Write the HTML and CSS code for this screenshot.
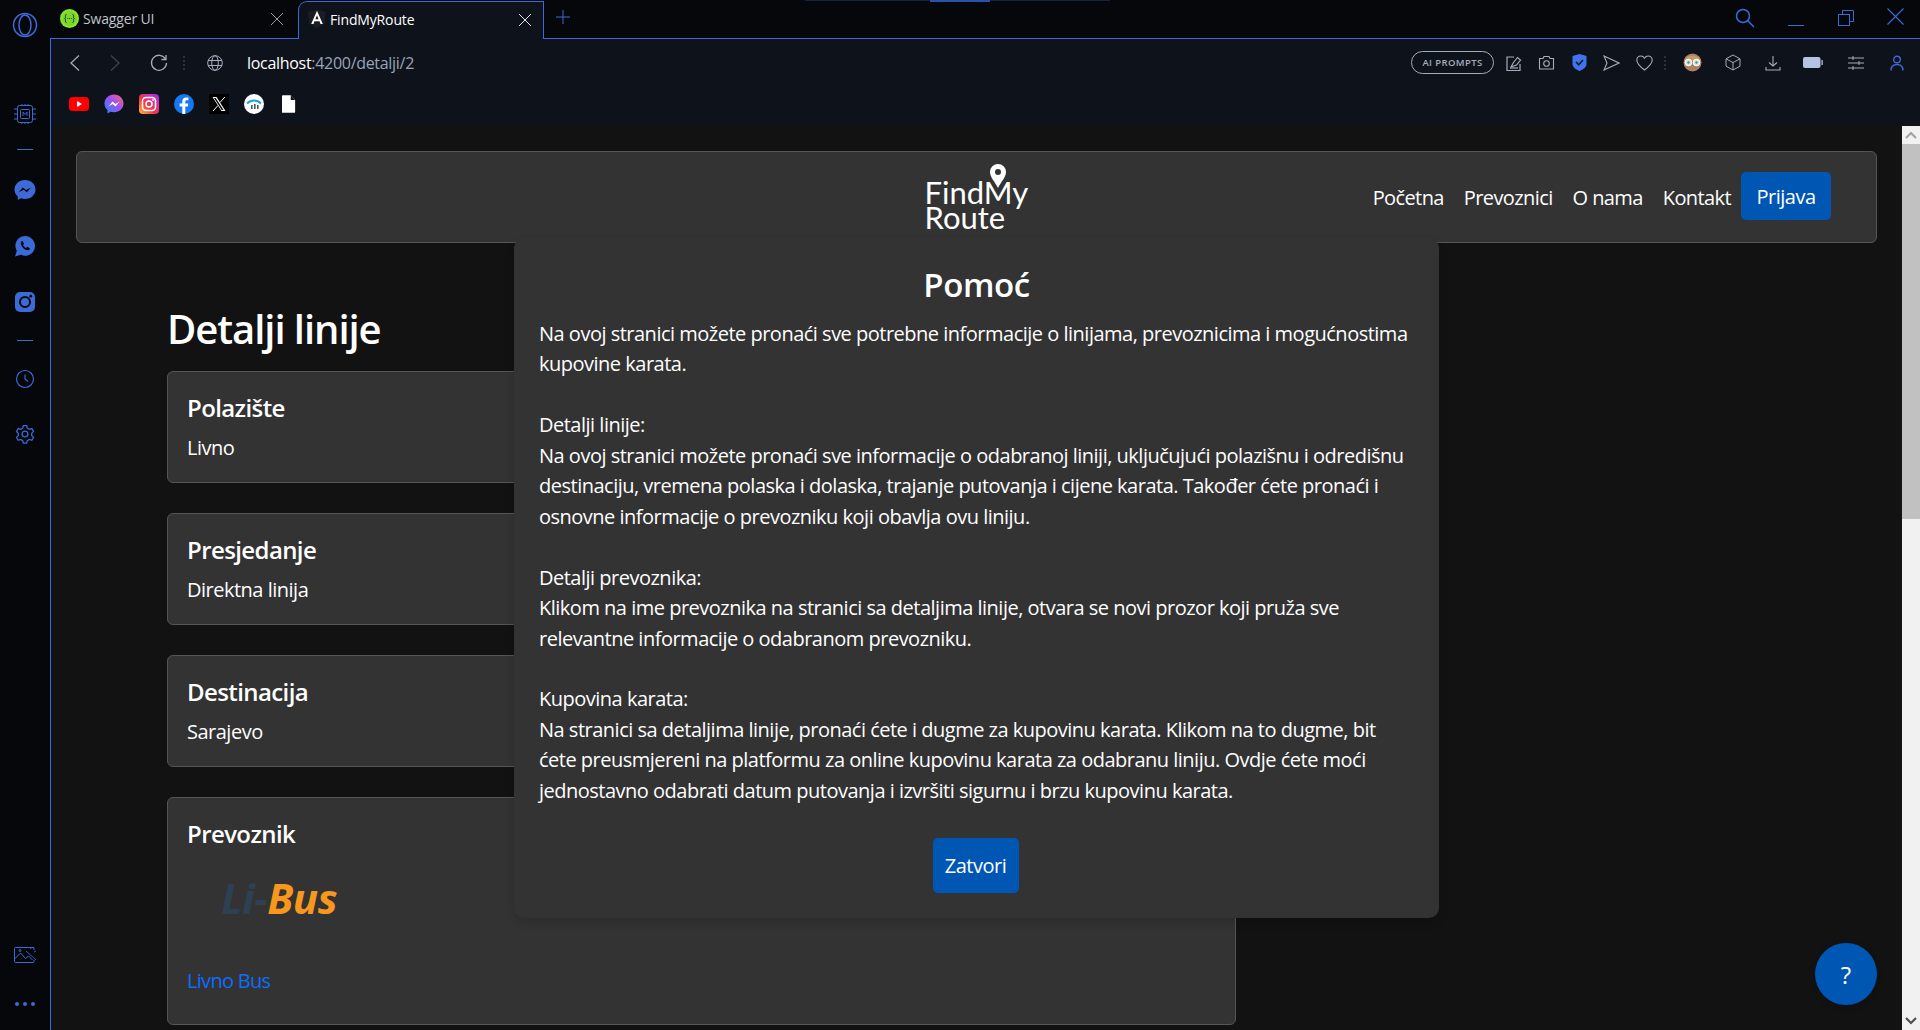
FILE: index.html
```html
<!DOCTYPE html>
<html lang="bs">
<head>
  <meta charset="UTF-8" />
  <title>FindMyRoute</title>
  <link rel="stylesheet" href="styles.css">
</head>
<body>
  <!-- traka s tabovima -->
  <div class="tabstrip">
    <div class="opera-slot">
      <svg width="26" height="26" viewBox="0 0 26 26" fill="none" stroke="#3c6ad6" stroke-width="1.5"><circle cx="13" cy="13" r="11.5"/><ellipse cx="13" cy="13" rx="6" ry="10"/></svg>
    </div>
    <div class="tab">
      <svg class="fav" width="19" height="19" viewBox="0 0 19 19"><circle cx="9.5" cy="9.5" r="9.5" fill="#85ea2d"/><circle cx="9.5" cy="9.5" r="7.5" fill="#7bd626"/><path d="M6.5 5.5c-1.5 0-1 2-1 3s-1 1-1 1 1 0 1 1-.5 3 1 3M12.500 5.500c1.500 0 1 2 1 3s1 1 1 1-1 0-1 1 .5 3-1 3" fill="none" stroke="#173647" stroke-width="1"/><path d="M7.500 9.500h.8M9.200 9.500h.8M10.900 9.500h.8" stroke="#173647" stroke-width="1"/></svg>
      <span class="tab-title">Swagger UI</span>
      <svg class="tab-x" width="14" height="14" viewBox="0 0 14 14" stroke="#9aa0aa" stroke-width="1"><path d="M1 1l12 12M13 1L1 13"/></svg>
    </div>
    <div class="tab tab-active">
      <svg class="fav" width="18" height="19" viewBox="0 0 16 17"><path d="M8 0l8 2.800-1.300 10.400L8 17l-6.700-3.800L0 2.800z" fill="#1a1d24"/><path d="M8 1.500L2.800 13.500h2l1-2.600h4.400l1 2.600h2zM6.600 9.200L8 5.700l1.400 3.500z" fill="#fff"/></svg>
      <span class="tab-title">FindMyRoute</span>
      <svg class="tab-x" width="14" height="14" viewBox="0 0 14 14" stroke="#e4e7ec" stroke-width="1"><path d="M1 1l12 12M13 1L1 13"/></svg>
    </div>
    <svg class="tab-plus" width="16" height="16" viewBox="0 0 16 16" stroke="#3c6ad6" stroke-width="1"><path d="M8 1v14M1 8h14"/></svg>
    <div class="win-glow"></div>
    <div class="win-btns">
      <svg width="20" height="20" viewBox="0 0 20 20" fill="none" stroke="#3c6ad6" stroke-width="1.500"><circle cx="8" cy="8" r="6.500"/><path d="M12.700 12.700L19 19"/></svg>
      <svg width="16" height="20" viewBox="0 0 16 20" fill="none" stroke="#3c6ad6"><path d="M0 17.500h16"/></svg>
      <svg class="win-restore" width="16" height="16" viewBox="0 0 16 16" fill="none" stroke="#3c6ad6"><rect x="0.500" y="4.500" width="11" height="11"/><path d="M4.500 4.500v-4h11v11h-4"/></svg>
      <svg width="17" height="17" viewBox="0 0 17 17" fill="none" stroke="#3c6ad6" stroke-width="1.100"><path d="M0.500 0.500l16 16M16.500 0.500l-16 16"/></svg>
    </div>
  </div>

  <div class="shell">
    <!-- lijevi meni preglednika -->
    <aside class="sidebar">
      <svg class="side-ico side-chip" width="24" height="24" viewBox="0 0 24 24" fill="none" stroke="#3c6ad6"><rect x="4.500" y="3.500" width="15" height="17" rx="2"/><rect x="7.500" y="7.500" width="9" height="9" rx="1"/><path d="M9 2v1.500M12 2v1.500M15 2v1.500M9 20.500V22M12 20.500V22M15 20.500V22M1 7h3.500M1 12h3.500M1 17h3.500M19.500 7H23M19.500 12H23M19.500 17H23"/><path d="M10 14v-4l2 2.500 2-2.500v4" stroke-width="0.900"/></svg>
      <div class="side-sep"></div>
      <svg class="side-ico" width="24" height="24" viewBox="0 0 24 24"><path d="M12 2C6 2 1.500 6.200 1.500 11.600c0 2.900 1.200 5.300 3.300 7v3.400l3.100-1.700c1.300.4 2.700.6 4.100.6 6 0 10.500-4.200 10.500-9.500S18 2 12 2z" fill="#3c6ad6"/><path d="M5.800 14.300l4-4.700 3.300 2.500 4.900-2.500-4.100 4.700-3.200-2.500z" fill="#06070b"/></svg>
      <svg class="side-ico" width="24" height="24" viewBox="0 0 24 24"><path d="M12.200 2C6.800 2 2.400 6.300 2.400 11.700c0 1.800.5 3.500 1.400 5L2 22.500l6-1.700c1.300.7 2.800 1 4.200 1 5.400 0 9.800-4.300 9.800-9.700S17.600 2 12.200 2z" fill="#3c6ad6"/><path d="M8.800 7.200c-.9.600-1.200 1.800-.8 3.300.7 2.400 3 4.800 5.600 5.500 1.500.4 2.800 0 3.200-1.100.2-.5.100-.8-.3-1l-2-.9c-.3-.1-.6 0-.8.200l-.7.800c-1.300-.5-2.400-1.600-3-2.900l.7-.7c.2-.2.300-.5.100-.8l-.9-2c-.2-.4-.7-.6-1.100-.4z" fill="#06070b"/></svg>
      <svg class="side-ico side-insta" width="24" height="24" viewBox="0 0 24 24"><rect x="2" y="2" width="20" height="20" rx="5" fill="#3c6ad6"/><circle cx="12" cy="12" r="5" fill="none" stroke="#06070b" stroke-width="2"/><circle cx="17.800" cy="6.200" r="1.400" fill="#06070b"/></svg>
      <div class="side-sep"></div>
      <svg class="side-ico side-clock" width="20" height="20" viewBox="0 0 20 20" fill="none" stroke="#3c6ad6" stroke-width="1.200"><circle cx="10" cy="10" r="8.500"/><path d="M10 5.500V10l3 2.500"/></svg>
      <svg class="side-ico" width="20" height="20" viewBox="0 0 24 24" fill="none" stroke="#3c6ad6" stroke-width="1.500"><circle cx="12" cy="12" r="3.500"/><path d="M10 2h4l.7 3 2.500 1.400 3-.9 2 3.500-2.200 2.100v2.800l2.200 2.100-2 3.500-3-.9-2.500 1.400-.7 3h-4l-.7-3-2.500-1.400-3 .9-2-3.500 2.200-2.100V11L1.800 9l2-3.500 3 .9L9.300 5z"/></svg>
      <div class="side-spacer"></div>
      <svg class="side-gal" width="24" height="20" viewBox="0 0 24 20" fill="none" stroke="#3c6ad6"><path d="M21 6V3.500H2.500a1 1 0 0 0-1 1v13a1 1 0 0 0 1 1H20a1 1 0 0 0 1-1V16"/><path d="M1.500 15l6-6 5 5.500 3-2.500 4 4"/><circle cx="7" cy="6.500" r="1"/><path d="M13 7l10 9M17 3l1 2M21 8l2-1" stroke-width="0.900"/></svg>
      <div class="side-dots"><i></i><i></i><i></i></div>
    </aside>

    <div class="window">
      <!-- adresna traka -->
      <div class="toolbar">
        <div class="nav-left">
          <svg width="12" height="18" viewBox="0 0 12 18" fill="none" stroke="#a5adbb" stroke-width="1.300"><path d="M10 1.500L2 9l8 7.500"/></svg>
          <svg class="dim" width="12" height="18" viewBox="0 0 12 18" fill="none" stroke="#3d4350" stroke-width="1.300"><path d="M2 1.500L10 9l-8 7.500"/></svg>
          <svg class="reload" width="18" height="18" viewBox="0 0 18 18" fill="none" stroke="#a5adbb" stroke-width="1.300"><path d="M15.500 5A7.500 7.500 0 1 0 16.500 9"/><path d="M16 1v4.500h-4.500"/></svg>
          <div class="tool-dots"></div>
          <svg class="globe" width="16" height="16" viewBox="0 0 16 16" fill="none" stroke="#a5adbb"><circle cx="8" cy="8" r="7.300"/><ellipse cx="8" cy="8" rx="3.300" ry="7.300"/><path d="M1 5.500h14M1 10.500h14"/></svg>
          <div class="url"><span class="url-host">localhost</span>:4200/detalji/2</div>
        </div>
        <div class="nav-right">
          <span class="ai-pill">AI PROMPTS</span>
          <svg width="18" height="18" viewBox="0 0 18 18" fill="none" stroke="#a5adbb" stroke-width="1.200"><path d="M9 3H2v13.500h13V10"/><path d="M6 13l2.500-4.500 4-5 3 2.500-4 5z"/><path d="M5 14h8"/></svg>
          <svg width="17" height="15" viewBox="0 0 17 15" fill="none" stroke="#a5adbb" stroke-width="1.100"><path d="M1.500 3.500h3.500l1-2h5l1 2h3.500v10.500h-14z"/><circle cx="8.500" cy="8.500" r="2.800"/></svg>
          <svg width="15" height="17" viewBox="0 0 15 17"><path d="M7.500 0L14.500 2v8c0 3-3.500 5.700-7 7-3.500-1.300-7-4-7-7V2z" fill="#3f74ee"/><path d="M4 8l2.700 2.700L11 6" fill="none" stroke="#0e121a" stroke-width="1.600"/></svg>
          <svg width="17" height="16" viewBox="0 0 17 16" fill="none" stroke="#a5adbb" stroke-width="1.100"><path d="M1 1l15 7-15 7 3-7z"/></svg>
          <svg width="17" height="16" viewBox="0 0 17 16" fill="none" stroke="#a5adbb" stroke-width="1.100"><path d="M8.500 15C4 11.500.8 8.700.8 5.200.8 2.800 2.600 1 4.800 1 6.300 1 7.700 1.800 8.500 3.200 9.300 1.800 10.700 1 12.200 1c2.200 0 4 1.800 4 4.200 0 3.500-3.200 6.300-7.700 9.800z"/></svg>
          <div class="tool-dots tool-dots-r"></div>
          <svg width="19" height="19" viewBox="0 0 19 19"><circle cx="9.500" cy="9.500" r="9" fill="#b0825c"/><path d="M1 8c2-7 15-7 17 0z" fill="#c79a6a"/><circle cx="5.500" cy="9.500" r="3.300" fill="#d5e8e8" stroke="#fff"/><circle cx="13.500" cy="9.500" r="3.300" fill="#d5e8e8" stroke="#fff"/><circle cx="5.500" cy="9.500" r="1.200" fill="#4d8c92"/><circle cx="13.500" cy="9.500" r="1.200" fill="#4d8c92"/></svg>
          <svg width="16" height="17" viewBox="0 0 16 17" fill="none" stroke="#a5adbb" stroke-width="1"><path d="M8 1l7 3.800v7.400L8 16l-7-3.800V4.800z"/><path d="M1 4.800l7 3.800 7-3.800M8 8.600V16"/></svg>
          <svg width="16" height="16" viewBox="0 0 16 16" fill="none" stroke="#a5adbb" stroke-width="1.100"><path d="M8 1v10M4 7.500L8 11l4-3.500M1 12v3h14v-3"/></svg>
          <svg width="20" height="11" viewBox="0 0 20 11"><rect width="17.500" height="11" rx="2" fill="#b6c3de"/><rect x="18.300" y="3" width="1.700" height="5" fill="#8d99b2"/></svg>
          <svg width="16" height="16" viewBox="0 0 16 16" fill="none" stroke="#a5adbb" stroke-width="1"><path d="M0 3h16M0 8h16M0 13h16M5 1v4M11 6v4M5 11v4"/></svg>
          <svg width="14" height="16" viewBox="0 0 14 16" fill="none" stroke="#3c6ad6" stroke-width="1.400"><circle cx="7" cy="4.500" r="3.300"/><path d="M1 15.500c0-4 2.500-6 6-6s6 2 6 6"/></svg>
        </div>
      </div>

      <div class="bookmarks">
        <svg width="20" height="20" viewBox="0 0 20 20"><rect y="3" width="20" height="14" rx="3.500" fill="#f00"/><path d="M8 7l5 3-5 3z" fill="#fff"/></svg>
        <svg width="20" height="20" viewBox="0 0 20 20"><defs><linearGradient id="ms" x1="0" y1="1" x2="1" y2="0"><stop offset="0" stop-color="#1d8cf7"/><stop offset=".55" stop-color="#a050f0"/><stop offset="1" stop-color="#ff6a68"/></linearGradient></defs><path d="M10 0.500C4.500.5.500 4.500.5 9.500c0 2.700 1.100 5 3 6.600V19.500l3.100-1.700c1.100.3 2.200.4 3.400.4 5.500 0 9.500-3.900 9.500-8.700S15.500.5 10 .5z" fill="url(#ms)"/><path d="M4.500 12.500l4-5 3 2.500 4-2.500-4 5-3-2.500z" fill="#fff"/></svg>
        <svg width="20" height="20" viewBox="0 0 20 20"><defs><linearGradient id="ig" x1="0" y1="1" x2="1" y2="0"><stop offset="0" stop-color="#fdc33f"/><stop offset=".4" stop-color="#f5383f"/><stop offset=".75" stop-color="#d42fb8"/><stop offset="1" stop-color="#7a35ea"/></linearGradient></defs><rect width="20" height="20" rx="4" fill="url(#ig)"/><rect x="3.500" y="3.500" width="13" height="13" rx="3.500" fill="none" stroke="#fff" stroke-width="1.500"/><circle cx="10" cy="10" r="3" fill="none" stroke="#fff" stroke-width="1.500"/><circle cx="14" cy="6" r=".9" fill="#fff"/></svg>
        <svg width="20" height="20" viewBox="0 0 20 20"><circle cx="10" cy="10" r="10" fill="#1877f2"/><path d="M11.300 20v-7.500h2.600l.4-3h-3V7.700c0-.9.400-1.500 1.600-1.500h1.500V3.600c-.4 0-1.300-.1-2.200-.1-2.400 0-3.900 1.400-3.900 4v2H5.600v3h2.700V20z" fill="#fff"/></svg>
        <svg width="20" height="20" viewBox="0 0 20 20"><rect width="20" height="20" fill="#000"/><path d="M3.500 3h4l9 14h-4zM5 4l7.800 12h1.700L6.700 4z" fill="#fff"/><path d="M15.800 3L11 8.500M9 11.500L4 17" stroke="#fff" fill="none"/></svg>
        <svg width="20" height="20" viewBox="0 0 20 20"><circle cx="10" cy="10" r="10" fill="#fff"/><path d="M3 9.500c4-4 10-4 14 0" fill="none" stroke="#1aa5d8" stroke-width="1.800"/><path d="M7 11h1.600v4H7zM10 10h1.600v5H10zM13 11h1.600v4H13z" fill="#3d5a6c"/></svg>
        <svg class="bm-file" width="14" height="18" viewBox="0 0 16 20"><path d="M1 0h9l5 5.500V19a1 1 0 0 1-1 1H1a1 1 0 0 1-1-1V1a1 1 0 0 1 1-1z" fill="#fff"/><path d="M10 0v5.500h5z" fill="#0e121a"/></svg>
      </div>

      <div class="viewport">
        <div class="page">
          <nav class="navbar">
            <div></div>
            <a class="logo">
              <svg class="logo-pin" width="18" height="24" viewBox="0 0 18 24"><path fill-rule="evenodd" d="M9 0a8 8 0 0 1 8 8c0 5-5 10-8 16C6 18 1 13 1 8a8 8 0 0 1 8-8zm0 5a3 3 0 1 0 0 6 3 3 0 0 0 0-6z" fill="#fff"/></svg>
              <span>FindMy</span>
              <span>Route</span>
            </a>
            <div class="nav-links">
              <a>Početna</a>
              <a>Prevoznici</a>
              <a>O nama</a>
              <a>Kontakt</a>
              <button class="btn-plavi btn-prijava">Prijava</button>
            </div>
          </nav>

          <main class="sadrzaj">
            <h1>Detalji linije</h1>
            <section class="kartica">
              <h2>Polazište</h2>
              <p>Livno</p>
            </section>
            <section class="kartica">
              <h2>Presjedanje</h2>
              <p>Direktna linija</p>
            </section>
            <section class="kartica">
              <h2>Destinacija</h2>
              <p>Sarajevo</p>
            </section>
            <section class="kartica">
              <h2>Prevoznik</h2>
              <div class="libus"><span class="li">Li-</span><span class="bus">Bus</span></div>
              <a class="link-prevoznik">Livno Bus</a>
            </section>
          </main>

          <button class="pomoc-btn">?</button>

          <div class="modal-wrap">
            <div class="modal">
              <h3>Pomoć</h3>
              <p>Na ovoj stranici možete pronaći sve potrebne informacije o linijama, prevoznicima i mogućnostima<br>kupovine karata.</p>
              <p>Detalji linije:<br>Na ovoj stranici možete pronaći sve informacije o odabranoj liniji, uključujući polazišnu i odredišnu<br>destinaciju, vremena polaska i dolaska, trajanje putovanja i cijene karata. Također ćete pronaći i<br>osnovne informacije o prevozniku koji obavlja ovu liniju.</p>
              <p>Detalji prevoznika:<br>Klikom na ime prevoznika na stranici sa detaljima linije, otvara se novi prozor koji pruža sve<br>relevantne informacije o odabranom prevozniku.</p>
              <p>Kupovina karata:<br>Na stranici sa detaljima linije, pronaći ćete i dugme za kupovinu karata. Klikom na to dugme, bit<br>ćete preusmjereni na platformu za online kupovinu karata za odabranu liniju. Ovdje ćete moći<br>jednostavno odabrati datum putovanja i izvršiti sigurnu i brzu kupovinu karata.</p>
              <button class="btn-plavi btn-zatvori">Zatvori</button>
            </div>
          </div>
        </div>

        <div class="scrollbar">
          <div class="sb-arrow"><svg width="12" height="8" viewBox="0 0 12 8" fill="none" stroke="#a3a3a3" stroke-width="2.200"><path d="M1 7l5-5 5 5"/></svg></div>
          <div class="sb-thumb"></div>
          <div class="sb-track"></div>
          <div class="sb-arrow"><svg width="12" height="8" viewBox="0 0 12 8" fill="none" stroke="#505050" stroke-width="2.200"><path d="M1 1l5 5 5-5"/></svg></div>
        </div>
      </div>
    </div>
  </div>
</body>
</html>
```

FILE: styles.css
```css
* { box-sizing: border-box; }
body {
  margin: 0;
  height: 1030px;
  overflow: hidden;
  display: flex;
  flex-direction: column;
  background: #06070b;
  color: #fff;
  font-family: 'Open Sans', 'Noto Sans', sans-serif;
}
svg { display: block; flex: none; }

/* traka s tabovima */
.tabstrip {
  height: 38px;
  display: flex;
  position: relative;
  z-index: 2;
  flex: none;
}
.opera-slot { width: 50px; padding: 12px 0 0 12px; }
.tab {
  width: 248px;
  height: 39px;
  padding: 9px 14px 0 10px;
  display: flex;
  font-size: 14px;
  letter-spacing: -0.15px;
  color: #bfc3ca;
}
.tab-title { margin-left: 4px; flex: 1; line-height: 19px; }
.tab-x { margin-top: 3px; }
.tab-active {
  width: 246px;
  margin-top: 1px;
  height: 38px;
  padding: 7px 11px 0 9px;
  color: #fff;
  background: #0e121a;
  border: 1px solid #3c6ad6;
  border-bottom: none;
  border-top-left-radius: 9px;
}
.tab-active .tab-title { margin-left: 4px; line-height: 21px; }
.tab-active .tab-x { margin-top: 4px; }
.tab-plus { margin: 9px 0 0 11px; }
.win-glow {
  position: absolute;
  left: 805px;
  top: 0;
  width: 305px;
  height: 1px;
  background: #14213f;
}
.win-glow::after {
  content: "";
  position: absolute;
  left: 125px;
  width: 60px;
  height: 2px;
  background: #2a50ad;
}
.win-btns {
  margin-left: auto;
  width: 185px;
  padding: 8px 16px 0 0;
  display: flex;
  justify-content: space-between;
  align-items: flex-start;
}
.win-restore { margin-top: 2px; }

.shell { flex: 1; display: flex; min-height: 0; }
.sidebar {
  width: 50px;
  flex: none;
  display: flex;
  flex-direction: column;
  align-items: center;
  padding: 64px 0 24px;
}
.side-ico { margin-bottom: 32px; }
.side-chip { margin-bottom: 23px; }
.side-insta { margin-bottom: 26px; }
.side-clock { margin-bottom: 35px; }
.side-sep { width: 16px; height: 1px; background: #3c6ad6; margin-bottom: 28px; }
.side-spacer { flex: 1; }
.side-gal { margin-bottom: 38px; }
.side-dots { display: flex; gap: 4px; }
.side-dots i { width: 4px; height: 4px; border-radius: 50%; background: #3c6ad6; }

.window {
  flex: 1;
  min-width: 0;
  display: flex;
  flex-direction: column;
  background: #0e121a;
  border-left: 1px solid #3c6ad6;
  border-top: 1px solid #3c6ad6;
}

/* adresna traka */
.toolbar {
  height: 47px;
  flex: none;
  display: flex;
  justify-content: space-between;
  align-items: center;
  padding: 0 6px 0 18px;
}
.nav-left { display: flex; align-items: center; }
.nav-left .dim { margin-left: 28px; }
.nav-left .reload { margin-left: 29px; }
.tool-dots {
  width: 2px;
  height: 14px;
  margin-left: 15px;
  background: repeating-linear-gradient(#2b303b 0 2px, transparent 2px 4px);
}
.globe { margin-left: 22px; }
.url { margin-left: 24px; font-size: 16px; letter-spacing: -0.3px; color: #9aa5b8; }
.url-host { color: #fff; }
.nav-right {
  display: grid;
  grid-template-columns: 87px 32px 33px 32px 33px 32px 10px 44px 38px 42px 38px 48px 34px;
  align-items: center;
  justify-items: center;
}
.ai-pill {
  width: 83px;
  height: 23px;
  justify-self: start;
  border: 1px solid #a5adbb;
  border-radius: 12px;
  font-size: 9.500px;
  font-weight: 600;
  line-height: 21px;
  text-align: center;
  letter-spacing: 0.4px;
  color: #a5adbb;
}
.tool-dots-r { margin: 0; }

.bookmarks {
  height: 40px;
  flex: none;
  display: flex;
  align-items: center;
  gap: 15px;
  padding: 0 0 4px 18px;
}
.bm-file { margin-left: 3px; }

.viewport { flex: 1; min-height: 0; display: flex; background: #121212; }
.page { flex: 1; min-width: 0; position: relative; overflow: hidden; padding: 25px 25px 0; }

/* navigacija */
.navbar {
  height: 92px;
  display: grid;
  grid-template-columns: 1fr auto 1fr;
  background: #333;
  border: 1px solid #555;
  border-radius: 6px;
  padding-right: 45px;
  align-items: center;
}
.logo {
  position: relative;
  display: flex;
  flex-direction: column;
  font-family: 'Lato', sans-serif;
  font-size: 31px;
  line-height: 25px;
  padding-top: 16px;
  width: 103px;
  margin-left: 44px;
}
.logo-pin { position: absolute; left: 64px; top: 0; }
.nav-links { display: flex; align-items: center; justify-content: flex-end; gap: 20px; font-size: 20px; letter-spacing: -0.6px; }
.btn-plavi {
  border: none;
  border-radius: 5px;
  background: #0056b3;
  color: #fff;
  font-family: inherit;
  font-size: 20px;
  letter-spacing: -0.5px;
}
.btn-prijava { width: 90px; height: 48px; margin: -2px 0 0 -10px; }

/* sadrzaj */
.sadrzaj { padding: 60px 0 0 91px; width: 1160px; }
h1 {
  margin: 0 0 16px;
  font-size: 40px;
  font-weight: 600;
  line-height: 52px;
  letter-spacing: -1.05px;
}
.kartica {
  background: #333;
  border: 1px solid #555;
  border-radius: 6px;
  padding: 21px 20px 16px 19px;
  margin-bottom: 30px;
  height: 112px;
}
.kartica h2 { margin: 0 0 10px; font-size: 24px; font-weight: 600; line-height: 30px; letter-spacing: -0.6px; }
.kartica p { margin: 0; font-size: 20px; line-height: 30px; letter-spacing: -0.5px; }
.kartica:last-child { height: 228px; }
.libus { margin: 29px 0 0 34px; font-size: 42px; line-height: 40px; font-style: italic; font-weight: 700; letter-spacing: -0.5px; }
.li { color: #2d4152; }
.bus { color: #f7971d; }
.link-prevoznik { display: block; margin-top: 48px; font-size: 20px; line-height: 30px; letter-spacing: -0.7px; color: #0d6efd; }

.pomoc-btn {
  position: absolute;
  right: 25px;
  bottom: 25px;
  width: 62px;
  height: 62px;
  border: none;
  border-radius: 50%;
  background: #0056b3;
  color: #fff;
  font-family: inherit;
  font-size: 24px;
  box-shadow: 0 2px 6px rgba(0,0,0,0.2);
}

/* modal */
.modal-wrap {
  position: absolute;
  inset: 0;
  display: flex;
  align-items: center;
  justify-content: center;
}
.modal {
  width: 925px;
  height: 680px;
  padding: 23px 25px 25px;
  background: #333;
  border-radius: 10px;
  box-shadow: 0 4px 10px rgba(0,0,0,0.15);
  font-size: 20px;
  line-height: 30.45px;
  letter-spacing: -0.5px;
  display: flex;
  flex-direction: column;
}
.modal h3 { margin: 0 0 10px; font-size: 33px; font-weight: 600; line-height: 48px; text-align: center; letter-spacing: -0.4px; }
.modal p { margin: 0 0 30.45px; white-space: nowrap; }
.btn-zatvori { align-self: center; width: 86px; height: 55px; margin: auto 2px 0 0; }

/* klizač */
.scrollbar { width: 18px; flex: none; display: flex; flex-direction: column; background: #f1f1f1; }
.sb-arrow { height: 18px; display: flex; align-items: center; justify-content: center; }
.sb-thumb { height: 375px; background: #c1c1c1; }
.sb-track { flex: 1; }
```
